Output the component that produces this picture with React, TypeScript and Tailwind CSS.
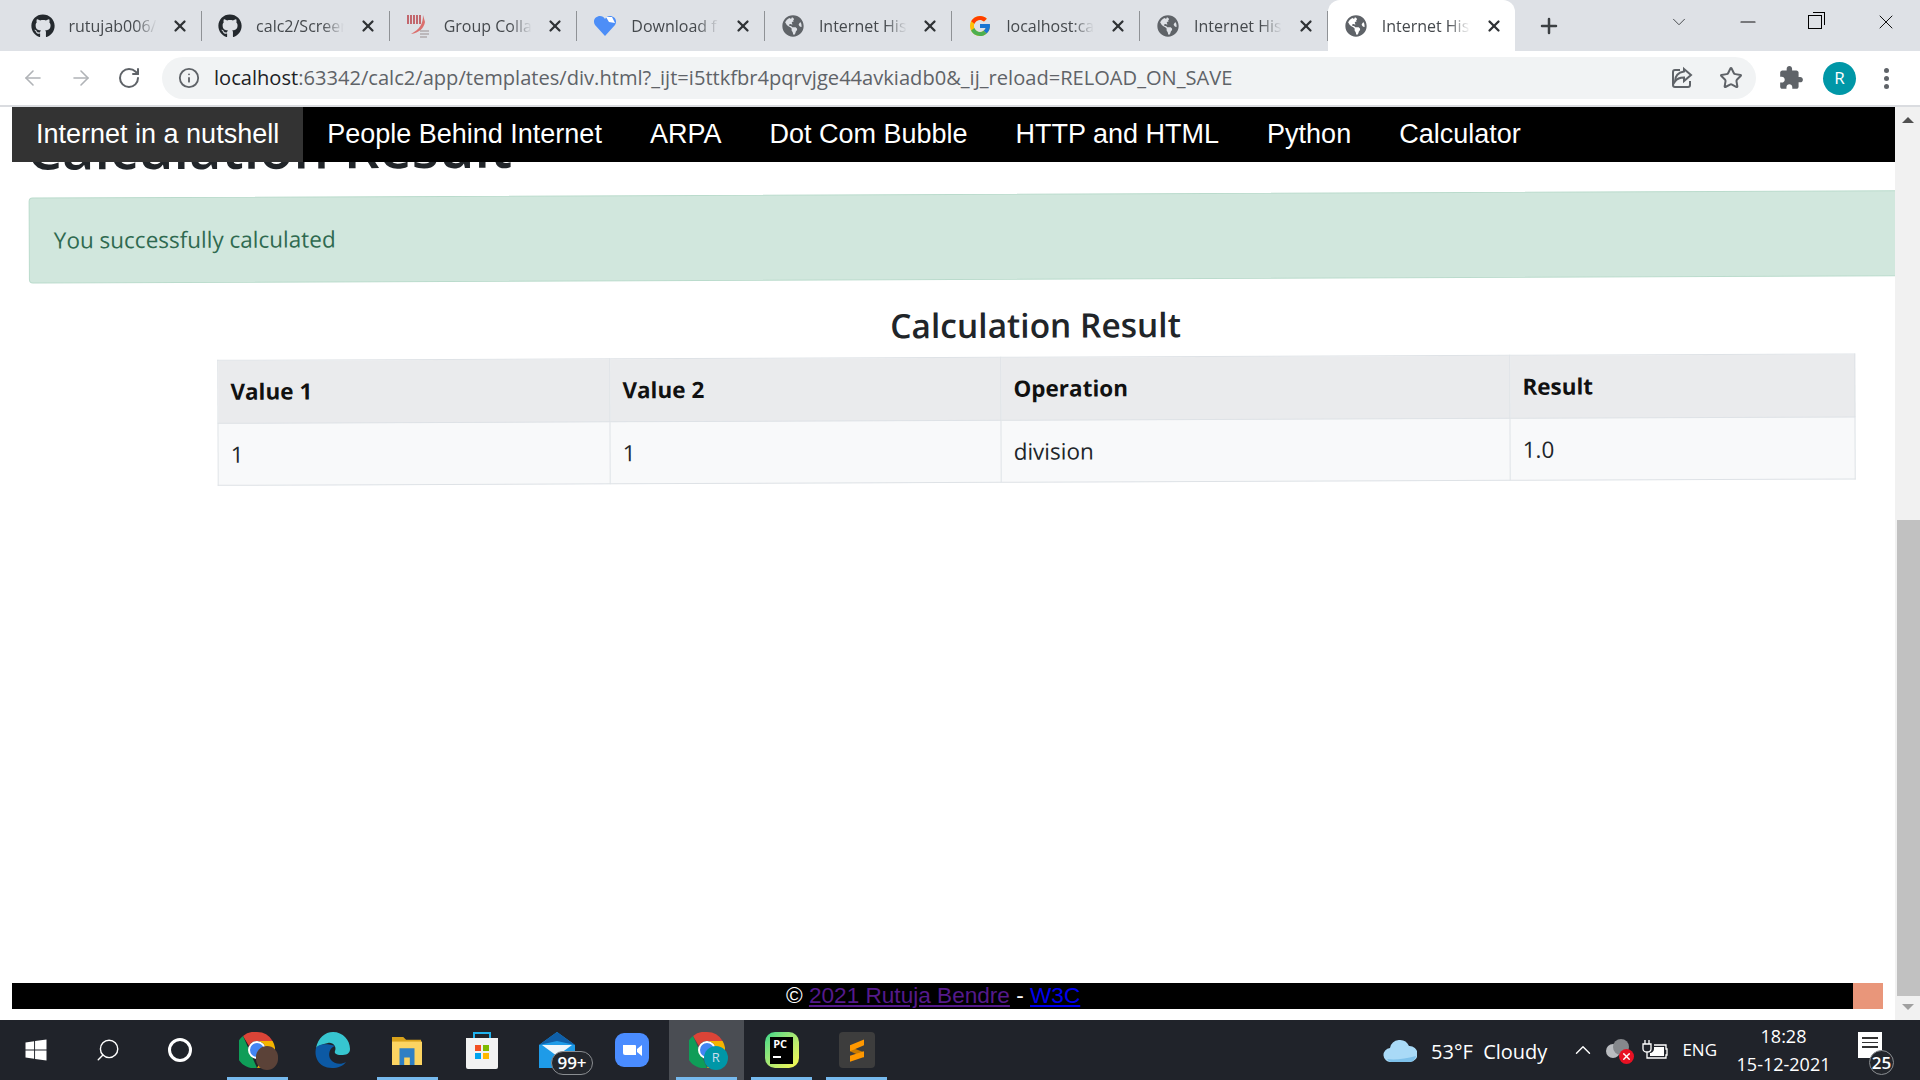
import { Fragment, type ReactNode } from "react";
import { FaGithub, FaGlobeAmericas, FaWindows } from "react-icons/fa";
import { FcGoogle } from "react-icons/fc";
import {
  ArrowLeft,
  ArrowRight,
  RotateCw,
  Info,
  Star,
  Plus,
  X,
  ChevronDown,
  ChevronUp,
  Minus,
  Search,
} from "lucide-react";

function NjitIcon() {
  return (
    <svg viewBox="0 0 24 24" className="h-6 w-6">
      <path d="M2 1v9M5 1v9M8 1v9M11 1v9M14 1v9" stroke="#b3262e" strokeWidth="1.3" fill="none" />
      <path d="M17 1c0 9-3 14-12 19 8-1 13-6 14-12z" fill="#d9534f" opacity="0.8" />
      <path d="M14 17h9M14 20h9M14 23h7" stroke="#9a8f8f" strokeWidth="1.2" />
    </svg>
  );
}

function HeartIcon() {
  return (
    <svg viewBox="0 0 24 24" className="h-6 w-6">
      <path d="M12 22 2 11C-1 6 3 2 7 2c2 0 4 1 5 3 1-2 3-3 5-3 4 0 8 4 5 9z" fill="#4d8ef7" />
      <path d="M13 3l6 0 3 6-6-1z" fill="#fff" />
    </svg>
  );
}

const tabs: { title: string; icon: ReactNode; active?: boolean }[] = [
  { title: "rutujab006/", icon: <FaGithub className="h-6 w-6 text-[#24292e]" /> },
  { title: "calc2/Screen", icon: <FaGithub className="h-6 w-6 text-[#24292e]" /> },
  { title: "Group Collab", icon: <NjitIcon /> },
  { title: "Download f", icon: <HeartIcon /> },
  { title: "Internet Hist", icon: <FaGlobeAmericas className="h-[22px] w-[22px] text-[#5f6368]" /> },
  { title: "localhost:cal", icon: <FcGoogle className="h-6 w-6" /> },
  { title: "Internet Hist", icon: <FaGlobeAmericas className="h-[22px] w-[22px] text-[#5f6368]" /> },
  { title: "Internet Hist", icon: <FaGlobeAmericas className="h-[22px] w-[22px] text-[#5f6368]" />, active: true },
];

const navItems = [
  "Internet in a nutshell",
  "People Behind Internet",
  "ARPA",
  "Dot Com Bubble",
  "HTTP and HTML",
  "Python",
  "Calculator",
];

function TabStrip() {
  return (
    <div className="flex h-[51px] shrink-0 items-center bg-[#dee1e6] pl-[14.5px] font-['Open_Sans',sans-serif]">
      {tabs.map((tab, i) => (
        <div
          key={i}
          className={
            tab.active
              ? "flex h-[51px] w-[187.6px] items-center rounded-t-xl bg-white pl-4 pr-3"
              : "flex h-[30px] w-[187.6px] items-center border-r border-[#8f9296] pl-4 pr-3 last:border-0"
          }
        >
          <span className="flex w-6 shrink-0 justify-center">{tab.icon}</span>
          <span className="ml-[14px] w-[88px] overflow-hidden whitespace-nowrap text-[16px] text-[#45494d] [mask-image:linear-gradient(to_right,black_75%,transparent)]">
            {tab.title}
          </span>
          <X className="ml-auto h-[18px] w-[18px] text-[#2f3235]" strokeWidth={3} />
        </div>
      ))}
      <Plus className="ml-[22px] h-6 w-6 text-[#3c4043]" strokeWidth={2.5} />
      <div className="ml-auto flex items-center pb-[8px]">
        <ChevronDown className="mr-[46px] h-[22px] w-[22px] text-[#3c4043]" strokeWidth={1} />
        <Minus className="mr-[48px] h-[24px] w-[24px] text-[#111]" strokeWidth={1.2} />
        <div className="relative mr-[52px] h-[14px] w-[14px] border border-black">
          <div className="absolute -right-[4px] -top-[4px] h-[13px] w-[12px] border-r border-t border-black" />
        </div>
        <X className="mr-[22px] h-[24px] w-[24px] text-[#111]" strokeWidth={1} />
      </div>
    </div>
  );
}

function Toolbar() {
  return (
    <div className="flex h-[56px] shrink-0 items-center border-b-2 border-[#dadce0] bg-white font-['Open_Sans',sans-serif]">
      <ArrowLeft className="ml-[21px] h-6 w-6 text-[#b0b3b7]" strokeWidth={1.6} />
      <ArrowRight className="ml-[24px] h-6 w-6 text-[#b0b3b7]" strokeWidth={1.6} />
      <RotateCw className="ml-[24px] h-6 w-6 text-[#5f6368]" strokeWidth={2} />
      <div className="ml-[21px] flex h-[42px] w-[1594px] items-center rounded-full bg-[#f1f3f4] pl-4 pr-[13px]">
        <Info className="h-[22px] w-[22px] text-[#5f6368]" strokeWidth={2} />
        <span className="ml-[14px] whitespace-nowrap text-[20.1px] text-[#5f6368]">
          <span className="text-[#202124]">localhost</span>:63342/calc2/app/templates/div.html?_ijt=i5ttkfbr4pqrvjge44avkiadb0&amp;_ij_reload=RELOAD_ON_SAVE
        </span>
        <svg viewBox="0 0 24 24" className="ml-auto h-6 w-6 fill-none stroke-[#5f6368] stroke-2">
          <path d="M10 4H5a2 2 0 0 0-2 2v13a2 2 0 0 0 2 2h13a2 2 0 0 0 2-2v-4" />
          <path d="M14 3l7 6-7 6v-3.5c-4 0-7 1-9 4 0-5 3-9 9-10z" />
        </svg>
        <Star className="ml-[25px] h-6 w-6 text-[#5f6368]" strokeWidth={2} />
      </div>
      <svg viewBox="0 0 24 24" className="ml-[22px] h-[26px] w-[26px] fill-[#5f6368]">
        <path d="M20.5 11H19V7c0-1.1-.9-2-2-2h-4V3.5C13 2.12 11.88 1 10.5 1S8 2.12 8 3.5V5H4c-1.1 0-1.99.9-1.99 2v3.8H3.5c1.49 0 2.7 1.21 2.7 2.7s-1.21 2.7-2.7 2.7H2V20c0 1.1.9 2 2 2h3.8v-1.5c0-1.49 1.21-2.7 2.7-2.7 1.49 0 2.7 1.21 2.7 2.7V22H17c1.1 0 2-.9 2-2v-4h1.5c1.38 0 2.5-1.12 2.5-2.5S21.88 11 20.5 11z" />
      </svg>
      <div className="ml-[19px] flex h-[33px] w-[33px] items-center justify-center rounded-full bg-[#0097a7] text-[17px] text-white">
        R
      </div>
      <div className="ml-[28px] flex flex-col gap-[3px]">
        <span className="h-[5px] w-[5px] rounded-full bg-[#5f6368]" />
        <span className="h-[5px] w-[5px] rounded-full bg-[#5f6368]" />
        <span className="h-[5px] w-[5px] rounded-full bg-[#5f6368]" />
      </div>
    </div>
  );
}

function Nav() {
  return (
    <nav className="relative z-10 ml-3 flex h-[55px] shrink-0 bg-black font-['Liberation_Sans',sans-serif] text-[27px] text-white">
      {navItems.map((item, i) => (
        <a
          key={item}
          className={
            i === 0
              ? "flex items-center bg-[#333] px-6 whitespace-nowrap"
              : "flex items-center px-6 whitespace-nowrap"
          }
        >
          {item}
        </a>
      ))}
    </nav>
  );
}

const thClass = "border border-[#dee2e6] px-3 text-left font-bold text-[#111]";
const tdClass = "border border-[#dee2e6] px-3 text-left text-[#212529]";

function Content() {
  return (
    <div className="-mt-[53px] flex -rotate-[0.22deg] flex-col font-['Open_Sans',sans-serif]">
      <h1 className="ml-[27px] whitespace-nowrap text-[56px] font-semibold leading-[70px] text-[#212529]">
        Calculation Result
      </h1>
      <div className="ml-[29px] -mr-6 mt-[15px] flex h-[86px] items-center rounded-l border border-[#badbcc] bg-[#d1e7dd] pl-6 text-[22.5px] text-[#2f6a50]">
        You successfully calculated
      </div>
      <div className="ml-[217px] mt-[20px] w-[1637px]">
        <h2 className="text-center text-[33.5px] font-semibold leading-[50px] text-[#212529]">
          Calculation Result
        </h2>
        <table className="mt-[7px] w-full table-fixed border-collapse text-[22.5px]">
          <colgroup>
            <col className="w-[392px]" />
            <col className="w-[391px]" />
            <col className="w-[509px]" />
            <col className="w-[345px]" />
          </colgroup>
          <thead>
            <tr className="h-[63px] bg-[#eaebed]">
              <th className={thClass}>Value 1</th>
              <th className={thClass}>Value 2</th>
              <th className={thClass}>Operation</th>
              <th className={thClass}>Result</th>
            </tr>
          </thead>
          <tbody>
            <tr className="h-[62px] bg-[#f8f9fa]">
              <td className={tdClass}>1</td>
              <td className={tdClass}>1</td>
              <td className={tdClass}>division</td>
              <td className={tdClass}>1.0</td>
            </tr>
          </tbody>
        </table>
      </div>
    </div>
  );
}

function Footer() {
  return (
    <div className="mx-3 mb-[11px] mt-auto flex h-[26px] shrink-0 bg-black font-['Liberation_Sans',sans-serif] text-[22.6px] leading-[26px] text-white">
      <div className="flex-1 whitespace-nowrap pl-[774px]">
        © <a className="text-[#551a8b] underline">2021 Rutuja Bendre</a> - <a className="text-[#0000ee] underline">W3C</a>
      </div>
      <div className="w-[30px] bg-[#e9967a]" />
    </div>
  );
}

function Scrollbar() {
  return (
    <div className="flex w-[25px] shrink-0 flex-col items-center bg-[#f1f1f1]">
      <div className="mt-[10px] h-0 w-0 border-x-[6px] border-b-[6px] border-x-transparent border-b-[#505050]" />
      <div className="mt-[397px] h-[476px] w-[23px] self-end bg-[#c1c1c1]" />
      <div className="mt-[8px] h-0 w-0 border-x-[6px] border-t-[6px] border-x-transparent border-t-[#a0a0a0]" />
    </div>
  );
}

function ChromeIcon({ badge }: { badge: ReactNode }) {
  return (
    <div className="relative h-[36px] w-[36px]">
      <svg viewBox="0 0 36 36" className="h-[36px] w-[36px]">
        <path d="M18 0a18 18 0 0 1 15.6 9H18a9 9 0 0 0-8 5L4 4a18 18 0 0 1 14-4z" fill="#db4437" />
        <path d="M4 4l7.5 17L18 36A18 18 0 0 1 4 4z" fill="#0f9d58" />
        <path d="M33.6 9A18 18 0 0 1 18 36l8-14a9 9 0 0 0-8-13z" fill="#f4b400" />
        <circle cx="18" cy="18" r="8" fill="#4285f4" stroke="#fff" strokeWidth="2" />
      </svg>
      {badge}
    </div>
  );
}

function EdgeIcon() {
  return (
    <svg viewBox="0 0 36 36" className="h-[38px] w-[36px]">
      <path d="M2 16C4 6 11 0 19 0c10 0 17 8 17 17 0 5-4 6-9 6-5 0-7-2-6-4 2-4-2-9-7-8-6 1-10 3-12 5z" fill="#37c6d0" />
      <path d="M2 16c-2 8 2 20 16 20 6 0 11-2 14-6-5 3-12 2-15-2-4-5-1-13 4-14-8-3-17-2-19 2z" fill="#0c59a4" />
    </svg>
  );
}

function FolderIcon() {
  return (
    <svg viewBox="0 0 34 32" className="h-[30px] w-[32px]">
      <path d="M1 2h12l3 3h16v4H1z" fill="#d9a21b" />
      <path d="M1 7h32v25H1z" fill="#fcd462" />
      <path d="M9 14h16v18h-5v-8h-6v8H9z" fill="#2f7fc4" />
    </svg>
  );
}

function StoreIcon() {
  return (
    <svg viewBox="0 0 34 38" className="h-[38px] w-[34px]">
      <path d="M9 7V2h16v5" fill="none" stroke="#1fb2ee" strokeWidth="2" />
      <path d="M1 7h32v29a2 2 0 0 1-2 2H3a2 2 0 0 1-2-2z" fill="#f2f2f2" />
      <path d="M10 14h6v6h-6z" fill="#f25022" />
      <path d="M18 14h6v6h-6z" fill="#7fba00" />
      <path d="M10 22h6v6h-6z" fill="#00a4ef" />
      <path d="M18 22h6v6h-6z" fill="#ffb900" />
    </svg>
  );
}

function MailIcon() {
  return (
    <div className="relative h-[36px] w-[36px]">
      <svg viewBox="0 0 36 36" className="h-[36px] w-[36px]">
        <path d="M0 13 18 0l18 13v23H0z" fill="#1e9be8" />
        <path d="M3 13h30L18 24z" fill="#eef6fb" />
        <path d="M0 13 18 0l18 13-18-4z" fill="#0f5fa8" />
      </svg>
      <div className="absolute -bottom-[7px] -right-[18px] flex h-[24px] w-[42px] items-center justify-center rounded-full border border-[#8a8d91] bg-[#23262c] text-[17px] font-semibold text-white">
        99+
      </div>
    </div>
  );
}

function ZoomIcon() {
  return (
    <div className="flex h-[34px] w-[34px] items-center justify-center rounded-[9px] bg-[#4a8cff]">
      <svg viewBox="0 0 24 24" className="h-6 w-6">
        <path d="M3 7h12a1 1 0 0 1 1 1v9H5a2 2 0 0 1-2-2z" fill="#fff" />
        <path d="M17 11l5-4v11l-5-4z" fill="#fff" />
      </svg>
    </div>
  );
}

function PyCharmIcon() {
  return (
    <div className="relative flex h-[36px] w-[34px] items-center justify-center rounded-[10px] bg-gradient-to-br from-[#21d789] to-[#fcf84a]">
      <div className="flex h-[27px] w-[23px] flex-col bg-black px-[3px] text-[11px] font-bold leading-[13px] text-white">
        PC
        <span className="mt-[6px] h-[2px] w-[8px] bg-white" />
      </div>
    </div>
  );
}

function SublimeIcon() {
  return (
    <div className="flex h-[36px] w-[36px] items-center justify-center rounded-sm bg-[#3d3d3d]">
      <svg viewBox="0 0 24 24" className="h-7 w-7">
        <path d="M6 9.5 18 14v4.5L6 13z" fill="#c97a00" />
        <path d="M6 8 18 3v5L6 13z" fill="#ff9800" />
        <path d="M6 17l12-4v5L6 22z" fill="#ff9800" />
      </svg>
    </div>
  );
}

function TaskIcon({ children, open, active }: { children: ReactNode; open?: boolean; active?: boolean }) {
  return (
    <div className={active ? "relative flex h-full w-[74.9px] items-center justify-center bg-[#4a4d53]" : "relative flex h-full w-[74.9px] items-center justify-center"}>
      {children}
      {open && <span className="absolute bottom-0 left-[7px] right-[7px] h-[3px] bg-[#76b9ed]" />}
    </div>
  );
}

function Taskbar() {
  return (
    <div className="flex h-[60px] shrink-0 items-center bg-[#20232a] font-['Open_Sans',sans-serif] text-white">
      <div className="flex w-[72px] justify-center">
        <FaWindows className="h-[24px] w-[24px] text-white" />
      </div>
      <div className="flex w-[72px] justify-center">
        <Search className="h-[26px] w-[26px] -scale-x-100 text-white" strokeWidth={1.3} />
      </div>
      <div className="flex w-[72px] justify-center">
        <div className="h-[24px] w-[24px] rounded-full border-[3.5px] border-white" />
      </div>
      <div className="ml-[4px] flex h-full items-center">
        <TaskIcon open>
          <ChromeIcon badge={<span className="absolute -bottom-[2px] -right-[3px] h-[24px] w-[22px] rounded-full bg-[#5b4238]" />} />
        </TaskIcon>
        <TaskIcon><EdgeIcon /></TaskIcon>
        <TaskIcon open><FolderIcon /></TaskIcon>
        <TaskIcon><StoreIcon /></TaskIcon>
        <TaskIcon><MailIcon /></TaskIcon>
        <TaskIcon><ZoomIcon /></TaskIcon>
        <TaskIcon open active>
          <ChromeIcon
            badge={
              <span className="absolute -bottom-[2px] -right-[3px] flex h-[24px] w-[24px] items-center justify-center rounded-full bg-[#0097a7] text-[13px] text-[#cde]">
                R
              </span>
            }
          />
        </TaskIcon>
        <TaskIcon open><PyCharmIcon /></TaskIcon>
        <TaskIcon open><SublimeIcon /></TaskIcon>
      </div>

      <div className="ml-auto flex h-full items-center">
        <svg viewBox="0 0 34 24" className="h-[24px] w-[34px]">
          <path d="M8 24a7 7 0 0 1-1-14 10 10 0 0 1 19-2 8 8 0 0 1 1 16z" fill="#a9daf7" />
          <path d="M8 24a7 7 0 0 1-4-3c8 1 18 0 29-3a8 8 0 0 1-6 6z" fill="#7ec1ea" />
        </svg>
        <span className="ml-[14px] mt-[3px] whitespace-nowrap text-[20px] leading-none">53°F&nbsp; Cloudy</span>
        <ChevronUp className="ml-[23px] h-[26px] w-[26px]" strokeWidth={1.3} />
        <div className="relative ml-[10px] h-[22px] w-[24px]">
          <span className="absolute left-0 top-[5px] h-[14px] w-[14px] rounded-full bg-[#b9bcc0]" />
          <span className="absolute left-[7px] top-0 h-[16px] w-[16px] rounded-full bg-[#85888c]" />
          <span className="absolute -right-[4px] -bottom-[3px] flex h-[15px] w-[15px] items-center justify-center rounded-full bg-[#e81123]">
            <X className="h-[11px] w-[11px] text-white" strokeWidth={3} />
          </span>
        </div>
        <svg viewBox="0 0 26 22" className="ml-[12px] h-[22px] w-[26px]">
          <path d="M3 1v4M7 1v4M1 5h8v5c0 2-2 3-4 3s-4-1-4-3zM5 13v6h19v-3h1v-6h-1V6H12" fill="none" stroke="#fff" strokeWidth="1.3" />
          <path d="M12 8h10v9H8v-3c2 0 4-2 4-4z" fill="#fff" />
        </svg>
        <span className="ml-[14px] text-[17px]">ENG</span>
        <div className="ml-[20px] flex w-[93px] flex-col items-center text-[18px] leading-[28px]">
          <span>18:28</span>
          <span className="whitespace-nowrap">15-12-2021</span>
        </div>
        <div className="relative ml-[28px] mr-[27px] h-[36px] w-[35px]">
          <div className="flex h-[26px] w-[24px] flex-col gap-[3px] bg-white px-[4px] pt-[5px]">
            {[0, 1, 2].map((n) => (
              <Fragment key={n}>
                <span className="h-[1.5px] bg-[#333]" />
              </Fragment>
            ))}
          </div>
          <span className="absolute -right-[1px] bottom-[-7px] flex h-[25px] w-[25px] items-center justify-center rounded-full border border-[#8a8d91] bg-[#23262c] text-[17px] font-semibold">
            25
          </span>
        </div>
      </div>
    </div>
  );
}

export default function App() {
  return (
    <div className="flex h-screen w-full flex-col overflow-hidden bg-white">
      <TabStrip />
      <Toolbar />
      <div className="flex min-h-0 flex-1">
        <main className="flex min-w-0 flex-1 flex-col overflow-hidden">
          <Nav />
          <Content />
          <Footer />
        </main>
        <Scrollbar />
      </div>
      <Taskbar />
    </div>
  );
}
